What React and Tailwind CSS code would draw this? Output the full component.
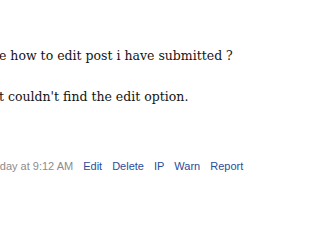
export default function App() {
  return (
    <div className="w-[316px] h-[206px] overflow-hidden bg-white relative">
      <div
        className="pt-[46px] ml-[-1px] text-[12.5px] leading-[20.5px] text-[#141414] whitespace-nowrap"
        style={{ fontFamily: '"DejaVu Serif", Georgia, serif' }}
      >
        <div>e how to edit post i have submitted ?</div>
        <div className="h-[20.5px]" />
        <div>t couldn't find the edit option.</div>
      </div>
      <div
        className="mt-[51px] ml-[-31px] flex gap-[10px] text-[11px] leading-[14px] whitespace-nowrap"
        style={{ fontFamily: '"Liberation Sans", Arial, sans-serif' }}
      >
        <span className="text-[#8c8c8c]">Yesterday at 9:12 AM</span>
        <span className="text-[#2b4c9b]">Edit</span>
        <span className="text-[#2b4c9b]">Delete</span>
        <span className="text-[#2b4c9b]">IP</span>
        <span className="text-[#2b4c9b]">Warn</span>
        <span className="text-[#2b4c9b]">Report</span>
      </div>
    </div>
  );
}
